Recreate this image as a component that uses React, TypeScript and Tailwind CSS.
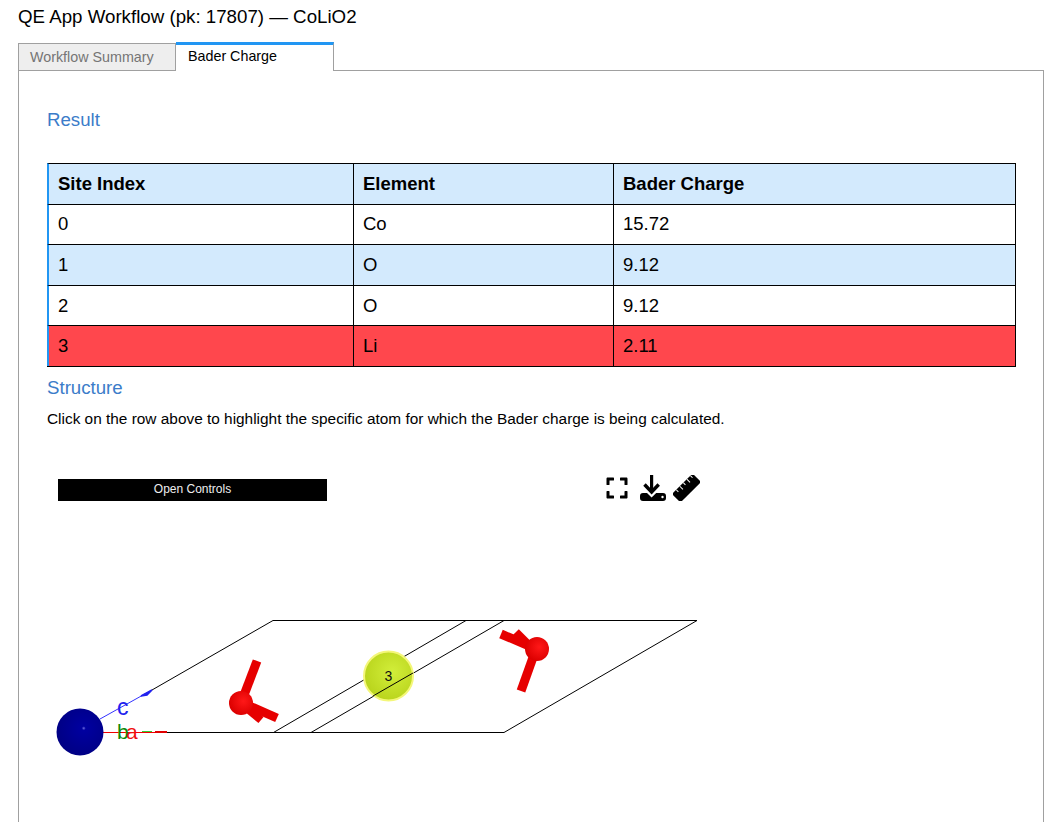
import { FaExpand } from "react-icons/fa";

const rows = [
  { site: "0", element: "Co", charge: "15.72", bg: "bg-white h-[40px]", text: "pb-[2px]" },
  { site: "1", element: "O", charge: "9.12", bg: "bg-[#d3eafd] h-[41px]", text: "" },
  { site: "2", element: "O", charge: "9.12", bg: "bg-white h-[40px]", text: "" },
  { site: "3", element: "Li", charge: "2.11", bg: "bg-[#ff474d] h-[41px]", text: "" },
];

const cellLeft = "border-t border-black pl-[9px] border-l-2 border-l-[#2196f3] w-[306px]";
const cell = "border-t border-l border-black pl-[9px]";

const DownloadIcon = () => (
  <svg width="26" height="26" viewBox="0 0 26 26" fill="#000">
    <path d="M3 18 H7 L11.6 22.500 L16.200 18 H23 a3 3 0 0 1 3 3 v2 a3 3 0 0 1 -3 3 H3 a3 3 0 0 1 -3 -3 v-2 a3 3 0 0 1 3 -3 Z" />
    <circle cx="22.500" cy="22" r="1.200" fill="#fff" />
    <path d="M11.600 0 V17" stroke="#000" strokeWidth="3.200" fill="none" />
    <path d="M4.500 9.500 L11.600 17 L18.700 9.500" stroke="#000" strokeWidth="3.400" fill="none" />
  </svg>
);

const RulerIcon = () => (
  <svg width="27" height="26" viewBox="0 0 27 26" fill="#000">
    <g transform="rotate(-45 13.500 13)">
      <rect x="-1" y="7" width="29" height="12" rx="2" />
      <path d="M5 7 v3 M10 7 v4.500 M15 7 v3 M20 7 v4.500 M25 7 v3" stroke="#fff" strokeWidth="1" />
    </g>
  </svg>
);

// the 3D structure viewer's picture
const Structure = () => (
  <svg width="1000" height="350" viewBox="0 470 1000 350" className="block">
    <defs>
      <radialGradient id="blue" cx="0.58" cy="0.42" r="0.6">
        <stop offset="0" stopColor="#6a6ae0" />
        <stop offset="0.07" stopColor="#0000a0" />
        <stop offset="1" stopColor="#000084" />
      </radialGradient>
      <radialGradient id="yellow" cx="0.58" cy="0.42" r="0.6">
        <stop offset="0" stopColor="#d2ee3a" />
        <stop offset="1" stopColor="#b9d41c" />
      </radialGradient>
      <radialGradient id="red" cx="0.6" cy="0.42" r="0.6">
        <stop offset="0" stopColor="#ff1818" />
        <stop offset="1" stopColor="#dc0000" />
      </radialGradient>
    </defs>
    <g stroke="#000" strokeWidth="1" fill="none">
      <path d="M152 690 L273 620.500 H697 L504 732.500 H167" />
      <path d="M273.500 732.500 L466 620.500" />
      <path d="M311 732.500 L504 620.500" />
    </g>
    <path d="M100 719 L152 690" stroke="#3333ff" strokeWidth="1" />
    <path d="M141 696 L152 690 L147 695 Z" fill="#2222ee" stroke="#2222ee" strokeWidth="1.500" />
    <path d="M100 732.500 H167" stroke="#f00000" strokeWidth="1" />
    <path d="M142 731.500 H152" stroke="#33cc33" strokeWidth="1" />
    <path d="M155 732 H167" stroke="#e00000" strokeWidth="2" />
    <circle cx="80" cy="732" r="23.500" fill="url(#blue)" />
    <text x="117" y="715" fontSize="23" fill="#2222ee" fontFamily="Liberation Sans, sans-serif">c</text>
    <text x="117" y="739" fontSize="21" fill="#0a8a0a" fontFamily="Liberation Sans, sans-serif">b</text>
    <text x="126" y="739" fontSize="21" fill="#f01010" fontFamily="Liberation Sans, sans-serif">a</text>
    <g stroke="#e60000" strokeLinecap="butt" fill="none">
      <path d="M241 703 L257 661" strokeWidth="9" />
      <path d="M244 706 L261 720" strokeWidth="8" />
      <path d="M245 704 L277 718" strokeWidth="9" />
      <path d="M536 649 L521 691" strokeWidth="9" />
      <path d="M532 648 L516 632" strokeWidth="8" />
      <path d="M534 648 L501 634" strokeWidth="9" />
    </g>
    <circle cx="241" cy="703" r="12" fill="url(#red)" />
    <circle cx="537" cy="649" r="12" fill="url(#red)" />
    <circle cx="388.500" cy="676" r="24.500" fill="url(#yellow)" stroke="#f4f77a" strokeWidth="2" />
    <path d="M373 696 L413 673" stroke="#000" strokeWidth="1" />
    <text x="388.500" y="681" textAnchor="middle" fontSize="14" fill="#111" fontFamily="Liberation Sans, sans-serif">3</text>
  </svg>
);

export default function App() {
  return (
    <div className="h-[822px] overflow-hidden bg-white pl-[18px] pr-[15px] font-['Liberation_Sans',Arial,sans-serif] text-black">
      <h1 className="h-[42px] pt-[6px] text-[18.72px] leading-[22px] font-normal">
        QE App Workflow (pk: 17807) — CoLiO2
      </h1>

      {/* Tabs */}
      <div className="relative z-10 flex h-[29px] items-stretch">
        <div className="mt-px w-[158px] border border-[#a0a0a0] bg-[#eeeeee] pl-[11px] pt-[4px] text-[14.3px] leading-[18px] text-[#757575]">
          Workflow Summary
        </div>
        <div className="w-[158px] border-r border-[#a0a0a0] border-t-[3px] border-t-[#2196f3] bg-white pl-[12px] pt-[2px] text-[14.3px] leading-[18px]">
          Bader Charge
        </div>
      </div>

      {/* Panel */}
      <div className="-mt-px h-[900px] border border-[#a0a0a0] px-[28px]">
        <h4 className="pt-[38px] text-[18.67px] leading-[22px] font-normal text-[#3b7cc9]">Result</h4>
        <table className="mt-[32px] w-[969px] table-fixed border-separate border-spacing-0 border-b border-r border-black text-[18.5px]">
          <thead>
            <tr className="h-[41px] bg-[#d3eafd] font-bold">
              <th className={`${cellLeft} text-left`}>Site Index</th>
              <th className={`${cell} w-[260px] text-left`}>Element</th>
              <th className={`${cell} text-left`}>Bader Charge</th>
            </tr>
          </thead>
          <tbody>
            {rows.map((row) => (
              <tr key={row.site} className={row.bg}>
                <td className={`${cellLeft} ${row.text}`}>{row.site}</td>
                <td className={`${cell} ${row.text}`}>{row.element}</td>
                <td className={`${cell} ${row.text}`}>{row.charge}</td>
              </tr>
            ))}
          </tbody>
        </table>
        <h4 className="pt-[10px] text-[18.67px] leading-[22px] font-normal text-[#3b7cc9]">Structure</h4>
        <p className="mt-[11px] text-[15.4px] leading-[18px]">
          Click on the row above to highlight the specific atom for which the Bader charge is being calculated.
        </p>

        {/* Viewer */}
        <div className="relative mt-[42px]">
          <div className="absolute left-[11px] top-[9px] z-10 h-[22px] w-[269px] bg-black text-center text-[12px] leading-[20px] text-[#eeeeee]">
            Open Controls
          </div>
          <div className="absolute left-[558px] top-[4px] z-10 flex h-[28px] items-center gap-[11px] text-black">
            <FaExpand size={24} />
            <DownloadIcon />
            <div className="-ml-[4px]">
              <RulerIcon />
            </div>
          </div>
          <div className="-ml-[47px]">
            <Structure />
          </div>
        </div>
      </div>
    </div>
  );
}
